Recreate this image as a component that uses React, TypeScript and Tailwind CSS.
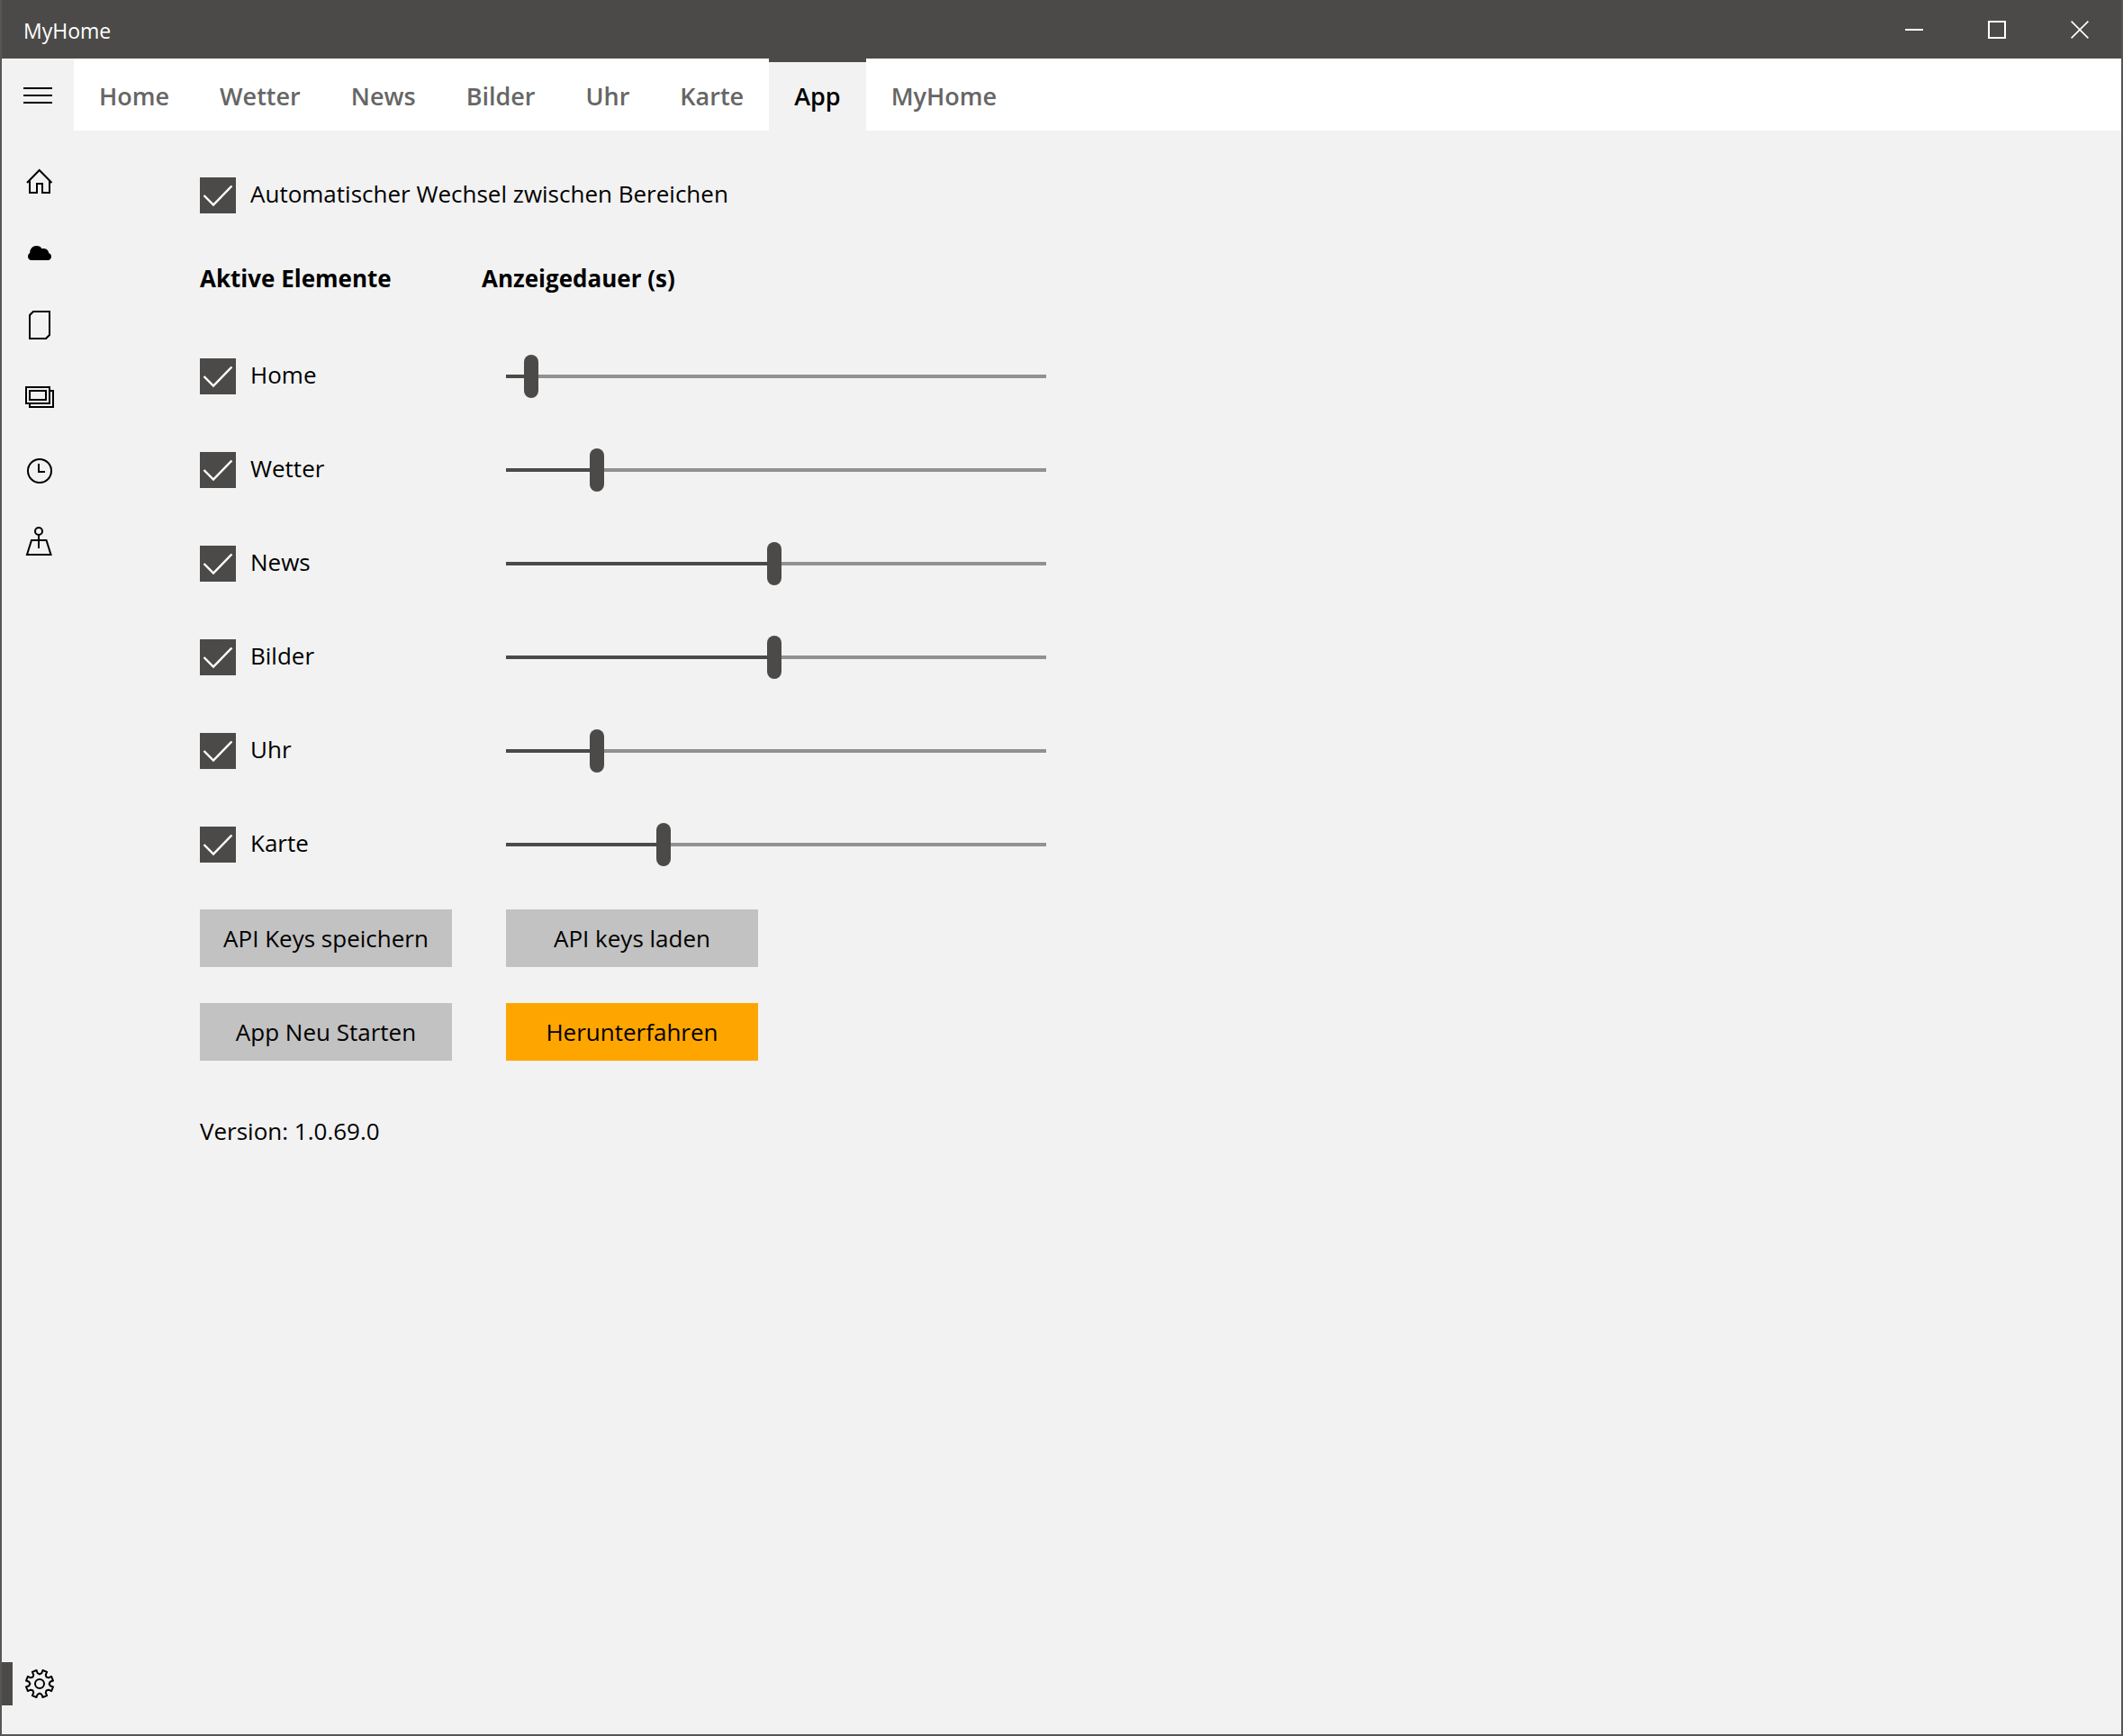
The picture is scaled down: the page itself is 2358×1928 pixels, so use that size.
import { useState } from "react";
import type { CSSProperties, ReactNode } from "react";

const gearPath = (() => {
  const points: string[] = [];
  const at = (degrees: number, radius: number) => {
    const a = (degrees * Math.PI) / 180;
    return `${(26 + radius * Math.sin(a)).toFixed(2)} ${(24 - radius * Math.cos(a)).toFixed(2)}`;
  };
  for (let k = 0; k < 8; k++) {
    const base = k * 45;
    points.push(at(base - 11, 12), at(base, 10.6), at(base + 11, 12), at(base + 13, 15.4), at(base + 32, 15.4));
  }
  return `M${points.join("L")}Z`;
})();

function Icon({ children }: { children: ReactNode }) {
  return (
    <svg
      viewBox="0 0 48 48"
      className="size-12"
      fill="none"
      stroke="currentColor"
      strokeWidth="2"
      aria-hidden="true"
    >
      {children}
    </svg>
  );
}

const sideItems: { label: string; icon: ReactNode }[] = [
  {
    label: "Home",
    icon: (
      <>
        <path d="M12 26 25.7 12 39.5 26" />
        <path d="M15 23.500V37H23V27H29V37H37V23.500" />
      </>
    ),
  },
  {
    label: "Wetter",
    icon: (
      <path
        fill="currentColor"
        stroke="none"
        d="M17 32C14.500 32 13 30.200 13 28S14.200 24.200 15.200 24C15 19.500 18.500 16 22.500 16C25.200 16 27.400 17.200 28.500 19.200C32.500 18.200 36 20.500 36.300 24.300C38 24.800 39 26.200 39 28C39 30.300 37.500 32 35 32Z"
      />
    ),
  },
  { label: "News", icon: <path d="M19 9H37V35L33 39H15V13Z" /> },
  {
    label: "Bilder",
    icon: (
      <>
        <path d="M11 13H37V31H11ZM15 17H33V27H15Z" />
        <path d="M38 17H41V35H15V32" />
      </>
    ),
  },
  {
    label: "Uhr",
    icon: (
      <>
        <circle cx="26" cy="26" r="13" />
        <path d="M25 18V27H32" />
      </>
    ),
  },
  {
    label: "Karte",
    icon: (
      <>
        <circle cx="25" cy="13" r="4" />
        <path d="M25 17V32M22 23H17L12 39H38.500L33.500 23H28" />
        <path d="M17 23H33" />
      </>
    ),
  },
];

const tabs = ["Home", "Wetter", "News", "Bilder", "Uhr", "Karte", "App", "MyHome"];

const sections = [
  { name: "Home", seconds: 5 },
  { name: "Wetter", seconds: 20 },
  { name: "News", seconds: 60 },
  { name: "Bilder", seconds: 60 },
  { name: "Uhr", seconds: 20 },
  { name: "Karte", seconds: 35 },
];

const MIN = 1;
const MAX = 120;

function Check({ label }: { label: string }) {
  return (
    <label className="flex h-10 w-fit items-center gap-4">
      <span className="grid size-10 shrink-0">
        <input
          type="checkbox"
          defaultChecked
          className="peer col-start-1 row-start-1 size-10 appearance-none border-2 border-[#4c4a48] checked:bg-[#4c4a48]"
        />
        <svg
          viewBox="0 0 40 40"
          className="pointer-events-none col-start-1 row-start-1 hidden size-10 peer-checked:block"
          fill="none"
          stroke="#fff"
          strokeWidth="2.4"
          aria-hidden="true"
        >
          <path d="M4.500 20 15 30.500 35.500 9.500" />
        </svg>
      </span>
      <span className="pb-1">{label}</span>
    </label>
  );
}

function Duration({ name, seconds }: { name: string; seconds: number }) {
  const [value, setValue] = useState(seconds);
  const fill = { "--fill": `${((value - MIN) / (MAX - MIN)) * 100}%` } as CSSProperties;
  return (
    <input
      type="range"
      aria-label={`Anzeigedauer ${name}`}
      min={MIN}
      max={MAX}
      value={value}
      onChange={(e) => setValue(Number(e.target.value))}
      style={fill}
      className="h-12 w-full max-w-[600px] appearance-none bg-transparent [&::-webkit-slider-runnable-track]:h-1 [&::-webkit-slider-runnable-track]:bg-[linear-gradient(to_right,#4c4a48_var(--fill),#919191_var(--fill))] [&::-webkit-slider-thumb]:-mt-[22px] [&::-webkit-slider-thumb]:h-12 [&::-webkit-slider-thumb]:w-4 [&::-webkit-slider-thumb]:appearance-none [&::-webkit-slider-thumb]:rounded-lg [&::-webkit-slider-thumb]:bg-[#4c4a48]"
    />
  );
}

function TitleBar() {
  return (
    <header className="flex h-[65px] items-stretch justify-between bg-[#4c4a48] text-white">
      <h1 className="self-center pl-6 pt-0.5 text-[23px] leading-8">MyHome</h1>
      <div className="flex">
        <button type="button" aria-label="Minimieren" className="grid w-[92px] place-items-center">
          <svg viewBox="0 0 20 20" className="size-5" stroke="currentColor" strokeWidth="2" fill="none">
            <path d="M0 10H20" />
          </svg>
        </button>
        <button type="button" aria-label="Maximieren" className="grid w-[92px] place-items-center">
          <svg viewBox="0 0 20 20" className="size-5" stroke="currentColor" strokeWidth="2" fill="none">
            <path d="M1 1H19V19H1Z" />
          </svg>
        </button>
        <button type="button" aria-label="Schließen" className="grid w-[92px] place-items-center">
          <svg viewBox="0 0 20 20" className="size-5" stroke="currentColor" strokeWidth="1.6" fill="none">
            <path d="M.6.6 19.400 19.400M19.400.6.6 19.400" />
          </svg>
        </button>
      </div>
    </header>
  );
}

function Sidebar() {
  return (
    <aside className="flex w-20 shrink-0 flex-col">
      <button type="button" aria-label="Menü" className="grid h-20 place-items-center pt-0.5">
        <svg viewBox="0 0 32 18" className="h-[18px] w-8" stroke="currentColor" strokeWidth="2">
          <path d="M0 1H32M0 9H32M0 17H32" />
        </svg>
      </button>
      <nav aria-label="Bereiche" className="flex flex-col pt-4">
        {sideItems.map((item) => (
          <button key={item.label} type="button" aria-label={item.label} className="grid h-20 place-items-center">
            <Icon>{item.icon}</Icon>
          </button>
        ))}
      </nav>
      <button type="button" aria-label="Einstellungen" className="mt-auto mb-4 flex h-20 items-center">
        <span className="h-12 w-3 bg-[#4c4a48]" />
        <span className="ml-1">
          <Icon>
            <path d={gearPath} strokeLinejoin="round" />
            <circle cx="26" cy="24" r="5" />
          </Icon>
        </span>
      </button>
    </aside>
  );
}

export default function App() {
  return (
    <div className="flex min-h-screen flex-col border-x-2 border-b-2 border-[#565656] bg-[#f2f2f2] font-['Open_Sans','Noto_Sans',sans-serif] text-[26px] leading-9 text-black">
      <TitleBar />
      <div className="flex grow">
        <Sidebar />
        <div className="flex min-w-0 grow flex-col">
          <nav aria-label="Einstellungen" className="flex h-20 bg-white text-[27px] font-semibold text-[#666]">
            {tabs.map((tab) => (
              <a
                key={tab}
                href="#"
                aria-current={tab === "App" ? "page" : undefined}
                className="flex items-center border-t-4 border-transparent px-7 aria-[current=page]:border-[#4c4a48] aria-[current=page]:bg-[#f2f2f2] aria-[current=page]:text-black"
              >
                {tab}
              </a>
            ))}
          </nav>
          <main className="px-[140px] pt-[52px]">
            <Check label="Automatischer Wechsel zwischen Bereichen" />
            <div className="grid grid-cols-[313px_1fr] pt-[54px] font-bold">
              <h2>Aktive Elemente</h2>
              <h2>Anzeigedauer (s)</h2>
            </div>
            <div className="flex flex-col gap-14 pt-[67px]">
              {sections.map((s) => (
                <div key={s.name} className="grid grid-cols-[340px_1fr] items-center">
                  <Check label={s.name} />
                  <Duration name={s.name} seconds={s.seconds} />
                </div>
              ))}
            </div>
            <div className="grid grid-cols-[280px_280px] gap-x-[60px] gap-y-10 pt-12">
              <button type="button" className="h-16 bg-[#c2c2c2]">API Keys speichern</button>
              <button type="button" className="h-16 bg-[#c2c2c2]">API keys laden</button>
              <button type="button" className="h-16 bg-[#c2c2c2]">App Neu Starten</button>
              <button type="button" className="h-16 bg-[#ffa500]">Herunterfahren</button>
            </div>
            <p className="pt-[60px]">Version: 1.0.69.0</p>
          </main>
        </div>
      </div>
    </div>
  );
}
